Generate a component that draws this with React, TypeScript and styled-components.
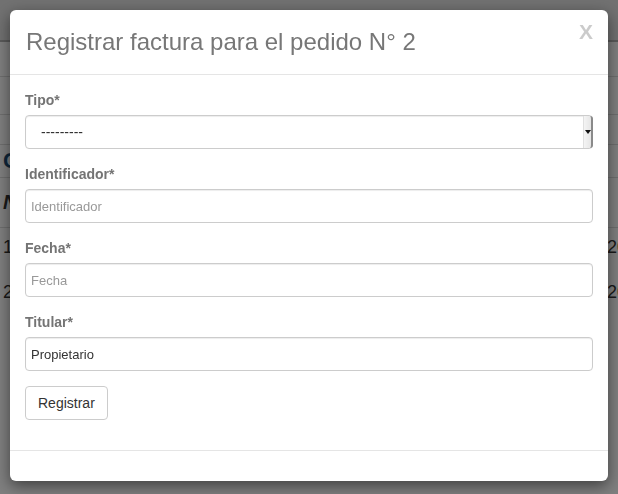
import React from "react";
import styled, { createGlobalStyle } from "styled-components";

const Global = createGlobalStyle`
  html, body { margin: 0; padding: 0; }
  body {
    width: 618px;
    height: 494px;
    overflow: hidden;
    background: #fff;
    font-family: "Liberation Sans", Arial, Helvetica, sans-serif;
    font-size: 14px;
    line-height: 1.42857;
    color: #333;
  }
  * { box-sizing: border-box; }
`;

const Page = styled.div`
  width: 618px;
  height: 494px;
  overflow: hidden;
  display: flex;
  flex-direction: column;
`;

const Navbar = styled.div`
  height: 42px;
  background: #e2e2e2;
  border-bottom: 2px solid #b4b4b4;
`;

const BgRow = styled.div<{ $h: number; $line?: boolean }>`
  height: ${(p) => p.$h}px;
  border-bottom: ${(p) => (p.$line ? "1px solid #ddd" : "none")};
  display: grid;
  grid-template-columns: 604px 1fr;
  align-items: center;
  padding: 0 0 0 3px;
  font-size: 18px;
  color: #333;
  white-space: nowrap;
`;

const BgHeading = styled.span`
  color: #1d4a72;
  font-weight: bold;
  font-size: 22px;
`;

const BgItalic = styled.span`
  font-style: italic;
  font-weight: bold;
  font-size: 20px;
`;

const Overlay = styled.div`
  position: fixed;
  inset: 0;
  background: rgba(0, 0, 0, 0.5);
`;

const Dialog = styled.div`
  position: fixed;
  top: 10px;
  left: 10px;
  width: 598px;
  background: #fff;
  border-radius: 6px;
  box-shadow: 0 5px 15px rgba(0, 0, 0, 0.5);
  display: flex;
  flex-direction: column;
`;

const Header = styled.div`
  padding: 15px 15px 15px 16px;
  border-bottom: 1px solid #e5e5e5;
  display: flex;
  align-items: flex-start;
  justify-content: space-between;
`;

const Title = styled.h4`
  margin: 0;
  font-size: 24px;
  font-weight: normal;
  line-height: 1.42857;
  color: #777;
`;

const Close = styled.button`
  border: 0;
  background: transparent;
  padding: 0;
  margin-top: -4px;
  margin-right: 0;
  font-family: "Liberation Sans", Arial, sans-serif;
  font-size: 21px;
  font-weight: bold;
  line-height: 1;
  color: #000;
  opacity: 0.2;
`;

const Body = styled.div`
  padding: 15px 15px 30px;
  display: flex;
  flex-direction: column;
`;

const Group = styled.div`
  margin-bottom: 15px;
  display: flex;
  flex-direction: column;
`;

const Label = styled.label`
  font-weight: bold;
  font-size: 14px;
  line-height: 20px;
  margin-bottom: 5px;
  color: #747474;
`;

const Input = styled.input`
  height: 34px;
  width: 100%;
  padding: 6px 5px;
  font-family: "Liberation Sans", Arial, sans-serif;
  font-size: 13px;
  color: #333;
  border: 1px solid #ccc;
  border-radius: 4px;
  background: #fff;
  box-shadow: inset 0 1px 1px rgba(0, 0, 0, 0.075);
  outline: none;
  &::placeholder { color: #999; }
`;

const SelectWrap = styled.div`
  position: relative;
  height: 34px;
`;

const Select = styled.select`
  appearance: none;
  -webkit-appearance: none;
  height: 34px;
  width: 100%;
  padding: 6px 15px;
  font-family: "Liberation Sans", Arial, sans-serif;
  font-size: 14px;
  color: #333;
  border: 1px solid #ccc;
  border-radius: 4px;
  background: #fff;
  box-shadow: inset 0 1px 1px rgba(0, 0, 0, 0.075);
  outline: none;
`;

const Arrow = styled.span`
  position: absolute;
  top: 1px;
  right: 0px;
  width: 10px;
  height: 32px;
  background: linear-gradient(to right, #f4f4f4, #e6e6e6);
  border-left: 1px solid #e0e0e0;
  border-right: 2px solid #8a8a8a;
  border-radius: 0 3px 3px 0;
  display: flex;
  align-items: center;
  justify-content: center;
  pointer-events: none;
  &::after {
    content: "";
    width: 0;
    height: 0;
    border-left: 3px solid transparent;
    border-right: 3px solid transparent;
    border-top: 4px solid #111;
  }
`;

const Button = styled.button`
  align-self: flex-start;
  height: 34px;
  padding: 6px 12px;
  font-family: "Liberation Sans", Arial, sans-serif;
  font-size: 14px;
  line-height: 20px;
  color: #333;
  background: #fff;
  border: 1px solid #ccc;
  border-radius: 4px;
`;

const Footer = styled.div`
  padding: 15px;
  height: 31px;
  border-top: 1px solid #e5e5e5;
`;

export default function App() {
  return (
    <>
      <Global />
      <Page>
        <Navbar />
        <BgRow $h={35} $line />
        <BgRow $h={38} $line />
        <BgRow $h={30} $line />
        <BgRow $h={33} $line>
          <BgHeading>C</BgHeading>
        </BgRow>
        <BgRow $h={50} $line>
          <BgItalic>N</BgItalic>
        </BgRow>
        <BgRow $h={40}>
          <span>1</span>
          <span>2016</span>
        </BgRow>
        <BgRow $h={50}>
          <span>2</span>
          <span>2016</span>
        </BgRow>
      </Page>
      <Overlay />
      <Dialog>
        <Header>
          <Title>Registrar factura para el pedido N° 2</Title>
          <Close type="button">X</Close>
        </Header>
        <Body>
          <Group>
            <Label>Tipo*</Label>
            <SelectWrap>
              <Select defaultValue="">
                <option value="">---------</option>
              </Select>
              <Arrow />
            </SelectWrap>
          </Group>
          <Group>
            <Label>Identificador*</Label>
            <Input placeholder="Identificador" />
          </Group>
          <Group>
            <Label>Fecha*</Label>
            <Input placeholder="Fecha" />
          </Group>
          <Group>
            <Label>Titular*</Label>
            <Input defaultValue="Propietario" />
          </Group>
          <Button type="button">Registrar</Button>
        </Body>
        <Footer />
      </Dialog>
    </>
  );
}
